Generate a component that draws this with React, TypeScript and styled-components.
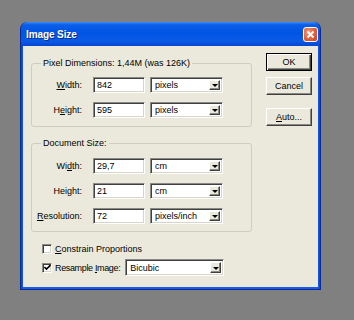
import React from "react";
import styled, { createGlobalStyle } from "styled-components";

const GlobalStyle = createGlobalStyle`
  html, body { margin: 0; padding: 0; }
  body {
    background: #808080;
    font-family: "Liberation Sans", Arial, sans-serif;
    font-size: 9px;
    color: #000;
  }
`;

const Page = styled.div`
  width: 354px;
  height: 320px;
  box-sizing: border-box;
  padding: 22px 0 0 20px;
`;

const Window = styled.div`
  width: 301px;
  box-sizing: border-box;
  border: 1px solid #0a2a94;
  border-top: none;
  border-radius: 7px 7px 0 0;
  background: linear-gradient(90deg, #0840c8 0px, #1a5ce8 2px, #1a5ce8 calc(100% - 2px), #0840c8 100%);
  display: flex;
  flex-direction: column;
`;

const TitleBar = styled.div`
  height: 24px;
  box-sizing: border-box;
  border-radius: 7px 7px 0 0;
  background: linear-gradient(180deg, #3d8af7 0%, #0a5ee8 12%, #0054e3 45%, #0a5ae6 80%, #0645cf 100%);
  display: flex;
  align-items: center;
  justify-content: space-between;
  padding: 0 2px 0 5px;
`;

const Title = styled.span`
  color: #fff;
  font-weight: bold;
  font-size: 10px;
  letter-spacing: -0.1px;
  text-shadow: 1px 1px 0 #0a2a8a;
`;

const CloseButton = styled.div`
  width: 15px;
  height: 15px;
  box-sizing: border-box;
  border: 1px solid #fff;
  border-radius: 3px;
  background: radial-gradient(circle at 35% 35%, #f39b7c 0%, #e0603a 55%, #c2401e 100%);
  display: flex;
  align-items: center;
  justify-content: center;
`;

const Client = styled.div`
  margin: 0 2px 2px;
  height: 241px;
  box-sizing: border-box;
  background: #ebe9db;
  display: flex;
  gap: 14px;
  padding: 7px 6px 0 8px;
`;

const LeftColumn = styled.div`
  width: 221px;
  margin-top: 4px;
  display: flex;
  flex-direction: column;
`;

const Group = styled.fieldset<{ $top: number; $pt: number; $pb: number }>`
  margin: ${(p) => p.$top}px 0 0 0;
  padding: ${(p) => p.$pt}px 0 ${(p) => p.$pb}px 4px;
  border: 1px solid #cfcdbd;
  border-radius: 3px;
  display: flex;
  flex-direction: column;
  gap: 9px;
  min-width: 0;
`;

const Legend = styled.legend`
  margin-left: 5px;
  padding: 0 2px;
  line-height: 12px;
  font-size: 9px;
`;

const Row = styled.div`
  display: flex;
  align-items: center;
  height: 16px;
`;

const Label = styled.label`
  width: 46px;
  text-align: right;
  margin-right: 11px;
  white-space: nowrap;
`;

const TextBox = styled.div`
  width: 52px;
  height: 16px;
  box-sizing: border-box;
  background: #fff;
  border: 1px solid;
  border-color: #8a8a84 #fff #fff #8a8a84;
  box-shadow: inset 1px 1px 0 #404040, inset -1px -1px 0 #d8d5c8;
  padding: 0 0 0 3px;
  display: flex;
  align-items: center;
  margin-right: 5px;
`;

const Select = styled.div<{ $w: number }>`
  width: ${(p) => p.$w}px;
  height: ${(p) => (p.$w > 80 ? 17 : 16)}px;
  flex-shrink: 0;
  box-sizing: border-box;
  background: #fff;
  border: 1px solid;
  border-color: #8a8a84 #fff #fff #8a8a84;
  box-shadow: inset 1px 1px 0 #404040, inset -1px -1px 0 #d8d5c8;
  padding: 2px 2px 2px 4px;
  display: flex;
  align-items: center;
  justify-content: space-between;
`;

const ArrowButton = styled.div`
  width: 11px;
  align-self: stretch;
  box-sizing: border-box;
  background: #ebe9db;
  border: 1px solid;
  border-color: #fff #404040 #404040 #fff;
  box-shadow: inset -1px -1px 0 #8a8a84;
  display: flex;
  align-items: center;
  justify-content: center;
  &::after {
    content: "";
    border-left: 3px solid transparent;
    border-right: 3px solid transparent;
    border-top: 3px solid #000;
    margin-top: 1px;
  }
`;

const Options = styled.div`
  display: flex;
  flex-direction: column;
  gap: 4px;
  margin-top: 10px;
  padding-left: 11px;
`;

const CheckRow = styled.div<{ $h: number }>`
  display: flex;
  align-items: center;
  height: ${(p) => p.$h}px;
  gap: 3px;
`;

const CheckBox = styled.div`
  width: 10px;
  height: 10px;
  box-sizing: border-box;
  background: #fff;
  border: 1px solid;
  border-color: #8a8a84 #fff #fff #8a8a84;
  box-shadow: inset 1px 1px 0 #404040, inset -1px -1px 0 #d8d5c8;
  display: flex;
  align-items: center;
  justify-content: center;
`;

const CheckText = styled.span<{ $tight?: boolean }>`
  margin-right: ${(p) => (p.$tight ? 2 : 4)}px;
  letter-spacing: ${(p) => (p.$tight ? -0.35 : 0)}px;
  white-space: nowrap;
`;

const ButtonColumn = styled.div`
  width: 46px;
  display: flex;
  flex-direction: column;
`;

const Button = styled.div<{ $default?: boolean; $top: number }>`
  height: 18px;
  margin-top: ${(p) => p.$top}px;
  box-sizing: border-box;
  background: #ebe9db;
  border: 1px solid;
  border-color: ${(p) => (p.$default ? "#000" : "#fff #404040 #404040 #fff")};
  box-shadow: ${(p) =>
    p.$default
      ? "inset 1px 1px 0 #fff, inset -1px -1px 0 #404040, inset -2px -2px 0 #8a8a84"
      : "inset -1px -1px 0 #8a8a84"};
  display: flex;
  align-items: center;
  justify-content: center;
`;

type Field = { label: React.ReactNode; value: string; unit: string };

const pixelFields: Field[] = [
  { label: <><u>W</u>idth:</>, value: "842", unit: "pixels" },
  { label: <>H<u>e</u>ight:</>, value: "595", unit: "pixels" },
];

const docFields: Field[] = [
  { label: <>Wi<u>d</u>th:</>, value: "29,7", unit: "cm" },
  { label: <>Hei<u>g</u>ht:</>, value: "21", unit: "cm" },
  { label: <><u>R</u>esolution:</>, value: "72", unit: "pixels/inch" },
];

const FieldRow = ({ f }: { f: Field }) => (
  <Row>
    <Label>{f.label}</Label>
    <TextBox>{f.value}</TextBox>
    <Select $w={73}>
      <span>{f.unit}</span>
      <ArrowButton />
    </Select>
  </Row>
);

const Check = () => (
  <svg width="7" height="7" viewBox="0 0 7 7">
    <path d="M0.5 3 L2.5 5 L6.5 1" stroke="#000" strokeWidth="1.6" fill="none" />
  </svg>
);

export default function App() {
  return (
    <>
      <GlobalStyle />
      <Page>
        <Window>
          <TitleBar>
            <Title>Image Size</Title>
            <CloseButton>
              <svg width="9" height="9" viewBox="0 0 9 9">
                <path d="M1.5 1.5 L7.5 7.5 M7.5 1.5 L1.5 7.5" stroke="#fff" strokeWidth="1.8" />
              </svg>
            </CloseButton>
          </TitleBar>
          <Client>
            <LeftColumn>
              <Group $top={0} $pt={8} $pb={8}>
                <Legend>Pixel Dimensions: 1,44M (was 126K)</Legend>
                {pixelFields.map((f, i) => (
                  <FieldRow key={i} f={f} />
                ))}
              </Group>
              <Group $top={10} $pt={9} $pb={7}>
                <Legend>Document Size:</Legend>
                {docFields.map((f, i) => (
                  <FieldRow key={i} f={f} />
                ))}
              </Group>
              <Options>
                <CheckRow $h={13}>
                  <CheckBox />
                  <CheckText>
                    <u>C</u>onstrain Proportions
                  </CheckText>
                </CheckRow>
                <CheckRow $h={17}>
                  <CheckBox>
                    <Check />
                  </CheckBox>
                  <CheckText $tight>
                    Resample <u>I</u>mage:
                  </CheckText>
                  <Select $w={99}>
                    <span>Bicubic</span>
                    <ArrowButton />
                  </Select>
                </CheckRow>
              </Options>
            </LeftColumn>
            <ButtonColumn>
              <Button $default $top={0}>OK</Button>
              <Button $top={6}>Cancel</Button>
              <Button $top={13}>
                <span>
                  <u>A</u>uto...
                </span>
              </Button>
            </ButtonColumn>
          </Client>
        </Window>
      </Page>
    </>
  );
}
